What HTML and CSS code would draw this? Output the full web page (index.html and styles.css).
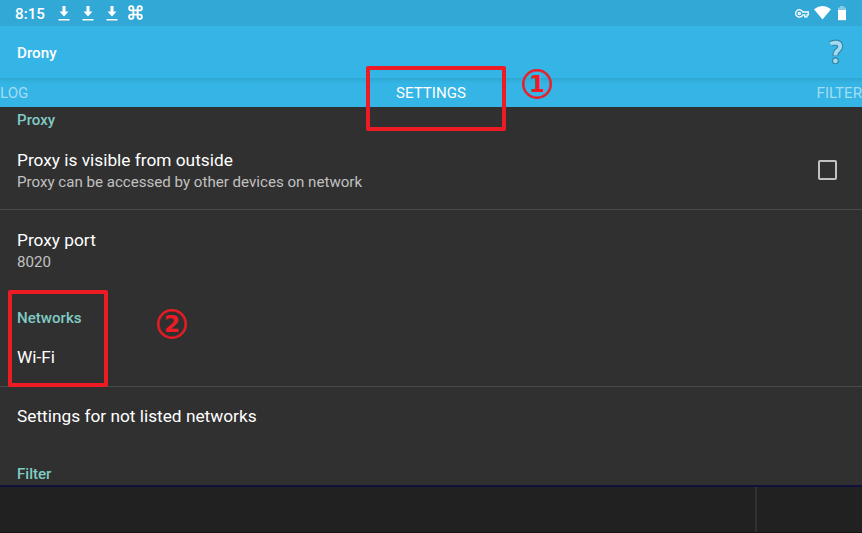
FILE: index.html
```
<!DOCTYPE html>
<html lang="en">
<head>
<meta charset="utf-8">
<title>Drony</title>
<link rel="stylesheet" href="styles.css">
</head>
<body>
<div class="screen">
  <header class="status">
    <span class="clock">8:15</span>
    <svg class="download" viewBox="0 0 12 15"><path d="M4.5 0h3v5.5h3L6 10.5 1.5 5.5h3zM.5 13h11v1.5H.5z"/></svg>
    <svg class="download" viewBox="0 0 12 15"><path d="M4.5 0h3v5.5h3L6 10.5 1.5 5.5h3zM.5 13h11v1.5H.5z"/></svg>
    <svg class="download" viewBox="0 0 12 15"><path d="M4.5 0h3v5.5h3L6 10.5 1.5 5.5h3zM.5 13h11v1.5H.5z"/></svg>
    <svg class="command" viewBox="0 0 24 24"><path d="M9 9V6a3 3 0 1 0-3 3h12a3 3 0 1 0-3-3v12a3 3 0 1 0 3-3H6a3 3 0 1 0 3 3z"/></svg>
    <div class="indicators">
      <svg class="key" viewBox="0 0 14 9"><path d="M7.8 3A3.7 3.7 0 1 0 7.8 5.8H9.7V7.9H12V5.8H13.3V3Z"/><circle cx="4.3" cy="4.4" r="1.1"/></svg>
      <svg class="wifi" viewBox="0 0 17 14"><path d="M0 3.2Q8.5-3.2 17 3.2L8.5 13.5z"/></svg>
      <svg class="battery" viewBox="0 0 8 15"><path class="faint" d="M2 0h4v1.5h2V4H0V1.5h2z"/><path d="M0 4h8v10.2H0z"/></svg>
    </div>
  </header>
  <div class="appbar">
    <h1 class="title">Drony</h1>
    <svg class="help" viewBox="0 0 18 26"><g class="help-edge"><path d="M3.4 4.9Q6 3.6 8.8 3.6Q13.2 3.8 13.2 7.4Q13.2 9.4 11 11.2Q8.4 13 8.4 17"/><path d="M8.4 21.8h.01"/></g><g class="help-fill"><path d="M3.4 4.9Q6 3.6 8.8 3.6Q13.2 3.8 13.2 7.4Q13.2 9.4 11 11.2Q8.4 13 8.4 16.4"/><path class="help-dot" d="M8.4 21.8h.01"/></g></svg>
  </div>
  <nav class="tabs">
    <span class="tab">LOG</span>
    <span class="tab active">SETTINGS</span>
    <span class="tab last">FILTER</span>
  </nav>
  <main class="settings">
    <h2 class="section">Proxy</h2>
    <div class="item outside">
      <div class="labels">
        <div class="name">Proxy is visible from outside</div>
        <div class="summary">Proxy can be accessed by other devices on network</div>
      </div>
      <span class="checkbox"></span>
    </div>
    <div class="item port">
      <div class="labels">
        <div class="name">Proxy port</div>
        <div class="summary">8020</div>
      </div>
    </div>
    <h2 class="section">Networks</h2>
    <div class="item wireless"><div class="name">Wi-Fi</div></div>
    <div class="item unlisted"><div class="name">Settings for not listed networks</div></div>
    <h2 class="section">Filter</h2>
  </main>
  <footer class="bottom"><div class="bottom-main"></div><div class="bottom-side"></div></footer>
  <div class="mark mark-settings"></div>
  <div class="mark mark-networks"></div>
  <div class="step step-one">1</div>
  <div class="step step-two">2</div>
</div>
</body>
</html>
```
FILE: styles.css
```
* { box-sizing: border-box; }
body { margin: 0; font-family: Roboto, sans-serif; color: #fff; }
svg { display: block; fill: #fff; flex: none; }
h1, h2 { margin: 0; font-size: 15.1px; font-weight: 500; }
.screen { position: relative; width: 862px; height: 533px; display: flex; flex-direction: column; overflow: hidden; background: #303030; }
.status { height: 26px; flex: none; display: flex; align-items: center; padding: 0 16px 0 15px; background: #31a8d6; }
.clock { width: 43px; font-size: 15.2px; font-weight: 500; line-height: 28px; padding-top: 2px; }
.download { width: 12px; height: 15px; margin-right: 12px; }
.command { width: 17px; height: 17px; margin-left: -3px; margin-bottom: 1px; fill: none; stroke: #fff; stroke-width: 2.7; }
.indicators { margin-left: auto; display: flex; align-items: center; }
.key { width: 14px; height: 9px; margin-right: 5px; fill: none; stroke: #fff; stroke-width: 1.3; }
.wifi { width: 17px; height: 14px; margin-right: 7px; }
.battery { width: 8px; height: 15px; }
.faint { opacity: .4; }
.appbar { height: 52px; flex: none; display: flex; align-items: center; justify-content: space-between; padding: 0 17px; background: #34b5e6; }
.title { font-size: 15.2px; line-height: 20px; padding-top: 2px; }
.help { width: 18px; height: 26px; fill: none; stroke-linejoin: round; }
.help-edge { stroke: #3983a5; stroke-width: 6; }
.help-edge path:last-child { stroke-width: 7; stroke-linecap: round; }
.help-fill { stroke: #a3daf0; stroke-width: 3.8; }
.help-dot { stroke-width: 4.8; stroke-linecap: round; }
.tabs { height: 29px; flex: none; display: grid; grid-template-columns: 1fr 1fr 1fr; align-items: center; background: linear-gradient(#2fa3cf 0, #31add9 2px, #34b5e6 6px); font-size: 15.1px; line-height: 29px; }
.tab { color: #a4dcf2; padding-top: 1px; }
.active { color: #fff; text-align: center; }
.last { text-align: right; }
.settings { height: 378px; flex: none; }
.section { color: #80cbc4; height: 26px; padding-left: 17px; line-height: 26px; }
.item { display: flex; justify-content: space-between; padding: 0 25px 0 17px; }
.name { font-size: 17.3px; line-height: 22px; }
.summary { color: #c1c1c1; font-size: 15.1px; line-height: 23px; }
.outside { height: 77px; padding-top: 16px; border-bottom: 1px solid #4a4a4a; }
.checkbox { width: 19px; height: 20px; margin-top: 11px; border: 2px solid #c1c1c1; border-radius: 2px; }
.port { height: 95px; padding-top: 19px; }
.wireless { height: 56px; padding-top: 15px; border-bottom: 1px solid #4a4a4a; }
.unlisted { height: 74px; padding-top: 18px; }
.bottom { height: 48px; flex: none; display: flex; border-top: 2px solid #10103a; border-bottom: 1px solid #171315; background: #212121; }
.bottom-main { width: 755px; }
.bottom-side { flex: 1; border-left: 2px solid #303030; }
.mark { position: absolute; border: 4px solid #ed1c24; border-radius: 2px; }
.mark-settings { left: 366px; top: 66px; width: 140px; height: 65px; }
.mark-networks { left: 8px; top: 290px; width: 100px; height: 97px; }
.step { position: absolute; width: 30px; height: 30px; border: 2px solid #ed1c24; border-radius: 50%; box-shadow: inset 0 0 0 .6px #ed1c24; color: #ed1c24; font: bold 23px/26px "DejaVu Sans", sans-serif; text-align: center; }
.step-one { left: 522px; top: 69px; }
.step-two { left: 157px; top: 309px; }
```
